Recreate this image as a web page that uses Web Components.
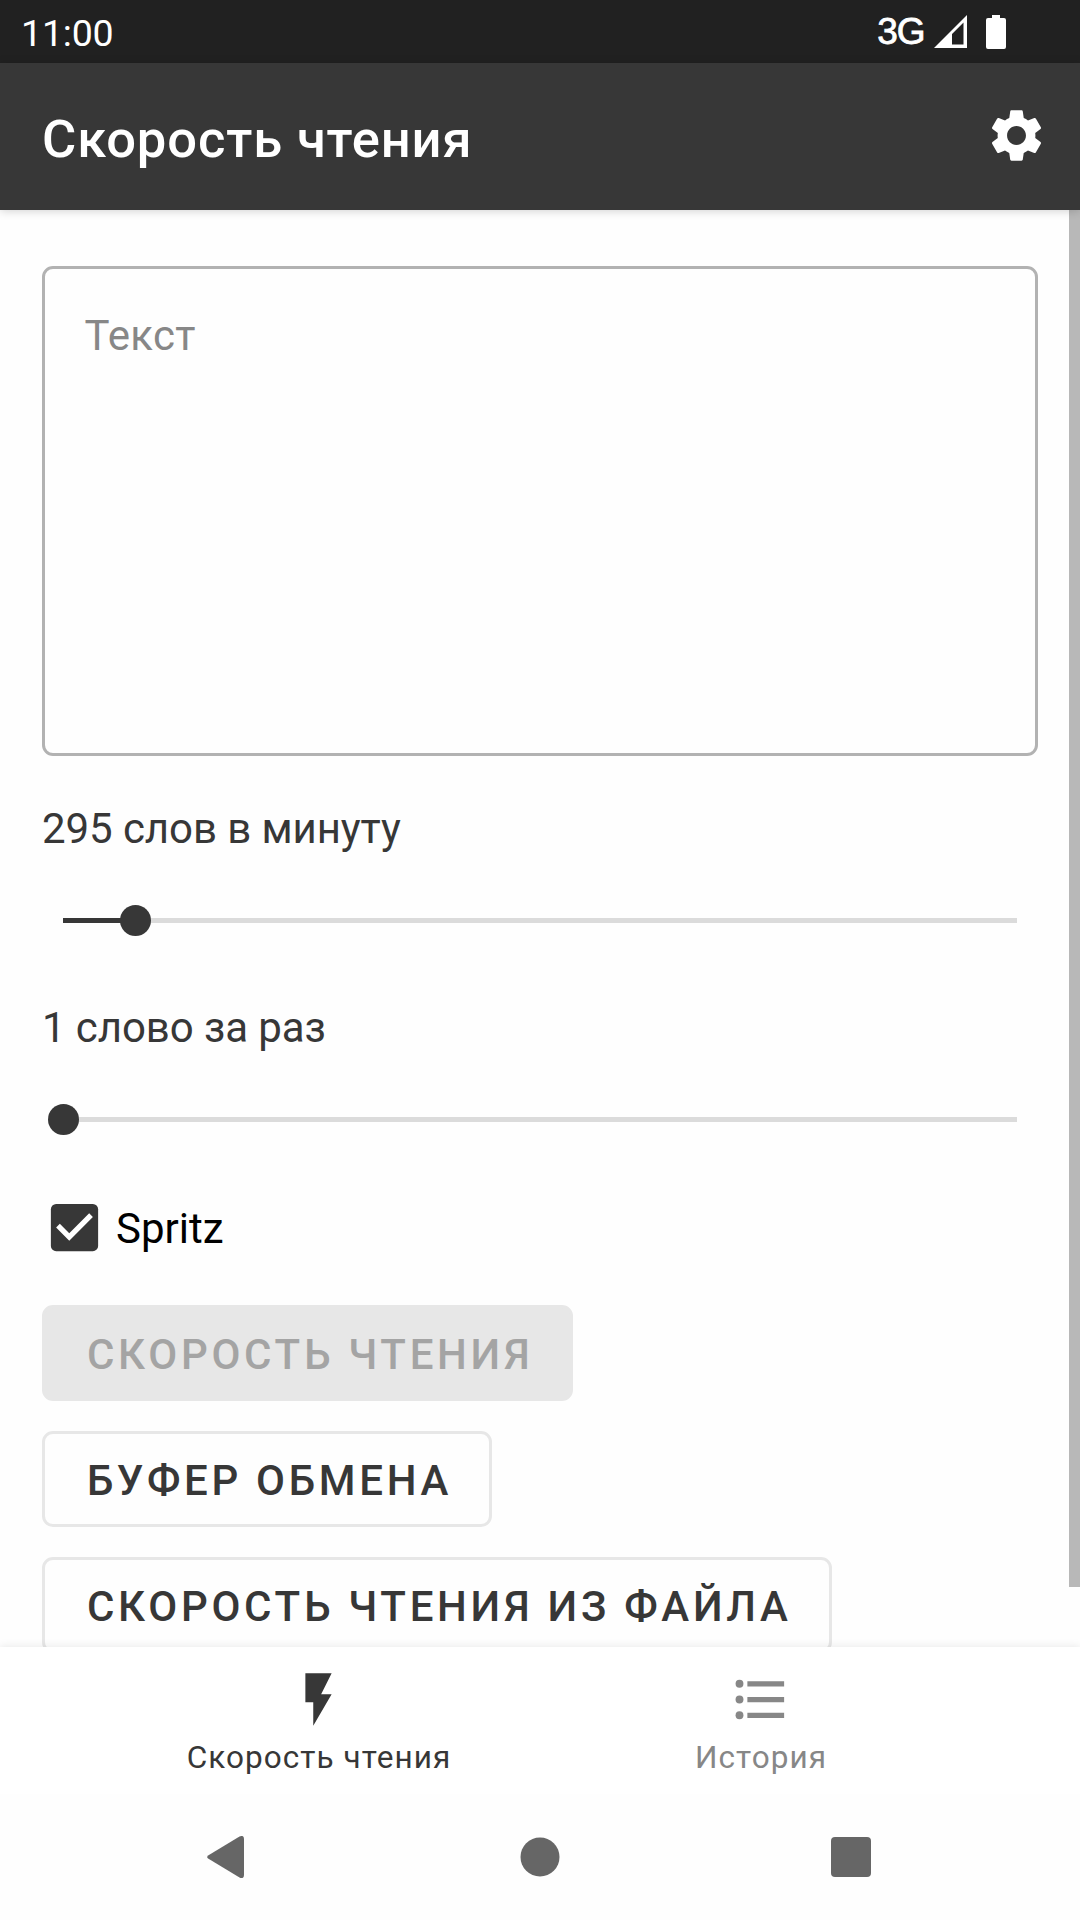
<!DOCTYPE html>
<html lang="ru">
<head>
<meta charset="utf-8">
<title>Скорость чтения</title>
<style>
  html, body {
    margin: 0;
    padding: 0;
  }

  body {
    background-color: #fefefe;
    color: #373737;
    font-family: Roboto, "Noto Sans", sans-serif;
    font-size: 42px;
    width: 1080px;
    height: 1920px;
    overflow: hidden;
  }
</style>
</head>
<body>
<reader-app></reader-app>

<script>
/**
 * Creates a template element from markup.
 *
 * @param {string} html - The markup of the template.
 * @returns {HTMLTemplateElement} - The template.
 */
const createTemplate = (html) => {
  const template = document.createElement('template')
  template.innerHTML = html
  return template
}

/**
 * Base class that clones the template of the subclass into its shadow root.
 */
class BaseElement extends HTMLElement {
  /**
   * Creates an instance of the current type.
   */
  constructor () {
    super()

    this.attachShadow({ mode: 'open' }).appendChild(
      this.constructor.template.content.cloneNode(true)
    )
  }
}

customElements.define(
  'status-bar',
  /**
   * Represents the system bar with clock, network and battery.
   */
  class extends BaseElement {
    static template = createTemplate(`
      <style>
        :host {
          display: flex;
          align-items: center;
          justify-content: space-between;
          box-sizing: border-box;
          height: 63px;
          padding: 0 74px 0 21px;
          background-color: #212121;
          color: #ffffff;
        }

        .clock {
          font-size: 37.5px;
          letter-spacing: -0.2px;
          line-height: 63px;
          padding-top: 3px;
        }

        .icons {
          display: flex;
          align-items: center;
        }

        .network {
          font-family: "Liberation Sans", sans-serif;
          font-size: 37px;
          letter-spacing: -1px;
          line-height: 63px;
          margin-right: 9.5px;
          -webkit-text-stroke: 0.8px #ffffff;
        }

        .signal {
          margin-right: 19px;
        }

        svg {
          display: block;
          fill: #ffffff;
        }
      </style>
      <span class="clock">11:00</span>
      <div class="icons">
        <span class="network">3G</span>
        <svg class="signal" width="33" height="34" viewBox="0 0 33 34">
          <path fill-rule="evenodd" d="M0 33L33 0v33zM18 19v10.500h11.500V7.500z"/>
        </svg>
        <svg width="20" height="34" viewBox="0 0 20 34">
          <path d="M6 0h8v3h4a2 2 0 0 1 2 2v27a2 2 0 0 1-2 2H2a2 2 0 0 1-2-2V5a2 2 0 0 1 2-2h4z"/>
        </svg>
      </div>
    `)
  }
)

customElements.define(
  'app-toolbar',
  /**
   * Represents the toolbar with a title and the settings button.
   */
  class extends BaseElement {
    static template = createTemplate(`
      <style>
        :host {
          display: flex;
          align-items: center;
          justify-content: space-between;
          box-sizing: border-box;
          height: 147px;
          padding: 0 32px 0 42px;
          background-color: #373737;
          color: #ffffff;
          box-shadow: 0 1px 9px rgba(0, 0, 0, 0.18);
          position: relative;
          z-index: 2;
        }

        h1 {
          margin: 0;
          font-size: 52.5px;
          font-weight: 500;
          letter-spacing: 0.88px;
          line-height: 62px;
          padding-top: 4px;
        }

        svg {
          display: block;
          fill: #ffffff;
          margin-bottom: 2px;
        }
      </style>
      <h1><slot></slot></h1>
      <svg width="63" height="63" viewBox="0 0 24 24">
        <path d="M19.140 12.940c.040-.300.060-.610.060-.940 0-.320-.020-.640-.070-.940l2.030-1.580c.180-.140.230-.410.120-.610l-1.920-3.320c-.120-.220-.370-.290-.590-.220l-2.390.960c-.500-.380-1.030-.700-1.620-.940l-.360-2.540c-.040-.240-.240-.410-.480-.410h-3.840c-.240 0-.430.170-.470.410l-.360 2.540c-.590.240-1.130.570-1.620.940l-2.390-.960c-.220-.080-.470 0-.590.220L2.740 8.870c-.120.210-.080.470.120.610l2.030 1.580c-.050.300-.090.630-.090.940s.020.640.070.940l-2.030 1.580c-.180.140-.230.410-.120.610l1.920 3.320c.120.220.370.290.590.220l2.390-.960c.500.380 1.030.700 1.620.940l.360 2.540c.050.240.240.410.480.410h3.840c.240 0 .440-.170.470-.410l.360-2.540c.590-.240 1.130-.560 1.620-.940l2.390.960c.220.080.470 0 .590-.220l1.920-3.320c.120-.220.070-.470-.120-.610l-2.010-1.580zM12 15.600c-1.980 0-3.600-1.620-3.600-3.600s1.620-3.600 3.600-3.600 3.600 1.620 3.600 3.600-1.620 3.600-3.600 3.600z"/>
      </svg>
    `)
  }
)

customElements.define(
  'text-field',
  /**
   * Represents the outlined multiline text field.
   */
  class extends BaseElement {
    static template = createTemplate(`
      <style>
        :host {
          display: block;
          flex-shrink: 0;
          box-sizing: border-box;
          height: 490px;
          padding: 42px 39.5px;
          border: 3px solid #b2b2b2;
          border-radius: 11px;
          color: #878787;
          letter-spacing: 0.25px;
          line-height: 49px;
        }
      </style>
      <slot></slot>
    `)
  }
)

customElements.define(
  'value-slider',
  /**
   * Represents a labelled slider.
   */
  class extends BaseElement {
    static template = createTemplate(`
      <style>
        :host {
          display: flex;
          flex-direction: column;
          flex-shrink: 0;
          gap: 51px;
        }

        .label {
          letter-spacing: -0.08px;
          line-height: 50px;
        }

        .slider {
          display: flex;
          align-items: center;
          height: 31px;
          margin: 0 21px;
        }

        .active {
          width: var(--active, 0px);
          height: 5px;
          background-color: #373737;
        }

        .thumb {
          width: 31px;
          height: 31px;
          margin: 0 -15.5px;
          border-radius: 50%;
          background-color: #373737;
          z-index: 1;
        }

        .track {
          flex: 1;
          height: 5px;
          background-color: #dbdbdb;
        }
      </style>
      <div class="label"><slot></slot></div>
      <div class="slider">
        <div class="active"></div>
        <div class="thumb"></div>
        <div class="track"></div>
      </div>
    `)

    /**
     * Called when the element is added to the document.
     */
    connectedCallback () {
      this.style.setProperty('--active', `${this.getAttribute('active') ?? 0}px`)
    }
  }
)

customElements.define(
  'check-box',
  /**
   * Represents a checked checkbox with its label.
   */
  class extends BaseElement {
    static template = createTemplate(`
      <style>
        :host {
          display: flex;
          flex-shrink: 0;
          align-items: center;
          height: 48px;
          gap: 10.5px;
          color: #000000;
        }

        svg {
          display: block;
          margin-left: 0.5px;
        }

        span {
          line-height: 48px;
          padding-top: 3px;
        }
      </style>
      <svg width="63" height="63" viewBox="0 0 24 24">
        <rect x="3" y="3" width="18" height="18" rx="2" fill="#373737"/>
        <path d="M10 17l-5-5 1.410-1.410L10 14.170l7.590-7.590L19 8z" fill="#ffffff"/>
      </svg>
      <span><slot></slot></span>
    `)
  }
)

customElements.define(
  'text-button',
  /**
   * Represents an outlined button, filled grey when disabled.
   */
  class extends BaseElement {
    static template = createTemplate(`
      <style>
        :host {
          display: block;
          box-sizing: border-box;
          height: 96px;
          padding: 2px 37px 0 42px;
          border: 3px solid #e7e7e7;
          border-radius: 11px;
          font-weight: 500;
          letter-spacing: 3.7px;
          line-height: 90px;
          white-space: nowrap;
          text-transform: uppercase;
        }

        :host([disabled]) {
          background-color: #e7e7e7;
          color: #a4a4a4;
        }
      </style>
      <slot></slot>
    `)
  }
)

customElements.define(
  'tab-item',
  /**
   * Represents a destination of the bottom navigation.
   */
  class extends BaseElement {
    static template = createTemplate(`
      <style>
        :host {
          display: flex;
          flex-direction: column;
          align-items: center;
          box-sizing: border-box;
          width: 441px;
          height: 147px;
          padding-top: 20.75px;
          color: #878787;
          font-size: 31.5px;
          letter-spacing: 1.05px;
        }

        :host([selected]) {
          color: #373737;
        }

        span {
          line-height: 37px;
          margin-top: 8.25px;
          padding-left: 1px;
        }
      </style>
      <slot name="icon"></slot>
      <span><slot></slot></span>
    `)
  }
)

customElements.define(
  'system-nav',
  /**
   * Represents the back, home and overview buttons.
   */
  class extends BaseElement {
    static template = createTemplate(`
      <style>
        :host {
          display: flex;
          align-items: center;
          justify-content: space-between;
          box-sizing: border-box;
          height: 126px;
          padding: 0 209px 0 207px;
        }

        svg {
          display: block;
          fill: #666666;
        }

        .home {
          margin-left: 5px;
        }
      </style>
      <svg width="37" height="42" viewBox="0 0 37 42">
        <path d="M1.500 19.200L32.500.600Q37-1.500 37 3v36q0 4.500-4.500 2.400L1.500 22.800Q-1.200 21 1.500 19.200z"/>
      </svg>
      <svg class="home" width="40" height="40" viewBox="0 0 40 40">
        <circle cx="20" cy="20" r="19.500"/>
      </svg>
      <svg width="40" height="40" viewBox="0 0 40 40">
        <rect width="40" height="40" rx="4"/>
      </svg>
    `)
  }
)

customElements.define(
  'reader-app',
  /**
   * Represents the reading speed screen.
   */
  class extends BaseElement {
    static template = createTemplate(`
      <style>
        :host {
          display: flex;
          flex-direction: column;
          height: 1920px;
        }

        main {
          display: flex;
          justify-content: space-between;
          height: 1437px;
          overflow: hidden;
        }

        .content {
          display: flex;
          flex-direction: column;
          align-items: stretch;
          width: 996px;
          padding: 56px 0 0 42px;
        }

        .speed {
          margin-top: 48px;
        }

        .count {
          margin-top: 67px;
        }

        check-box {
          margin-top: 68px;
        }

        .buttons {
          display: flex;
          flex-direction: column;
          flex-shrink: 0;
          align-items: flex-start;
          gap: 30px;
          margin-top: 54px;
        }

        .scrollbar {
          width: 11px;
          height: 1377px;
          background-color: #b8b8b8;
        }

        nav {
          display: flex;
          justify-content: center;
          gap: 1px;
          padding-right: 1px;
          background-color: #ffffff;
          box-shadow: 0 0 9px rgba(0, 0, 0, 0.1);
          clip-path: inset(-12px 0 0 0);
          position: relative;
          z-index: 2;
        }

        nav svg {
          display: block;
          fill: currentColor;
        }
      </style>
      <status-bar></status-bar>
      <app-toolbar>Скорость чтения</app-toolbar>
      <main>
        <div class="content">
          <text-field>Текст</text-field>
          <value-slider class="speed" active="72.5">295 слов в минуту</value-slider>
          <value-slider class="count" active="0.5">1 слово за раз</value-slider>
          <check-box>Spritz</check-box>
          <div class="buttons">
            <text-button disabled>Скорость чтения</text-button>
            <text-button>Буфер обмена</text-button>
            <text-button>Скорость чтения из файла</text-button>
          </div>
        </div>
        <div class="scrollbar"></div>
      </main>
      <nav>
        <tab-item selected>
          <svg slot="icon" width="63" height="63" viewBox="0 0 24 24">
            <path d="M7 2v11h3v9l7-12h-4l4-8z"/>
          </svg>
          Скорость чтения
        </tab-item>
        <tab-item>
          <svg slot="icon" width="63" height="63" viewBox="0 0 24 24">
            <circle cx="4" cy="6" r="1.500"/>
            <circle cx="4" cy="12" r="1.500"/>
            <circle cx="4" cy="18" r="1.500"/>
            <path d="M7 5h14v2H7zM7 11h14v2H7zM7 17h14v2H7z"/>
          </svg>
          История
        </tab-item>
      </nav>
      <system-nav></system-nav>
    `)
  }
)
</script>
</body>
</html>
